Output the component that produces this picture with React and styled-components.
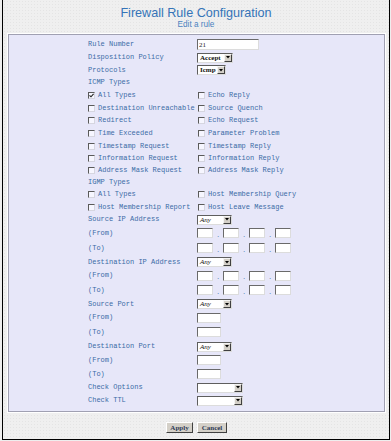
import React from 'react';
import styled, { createGlobalStyle } from 'styled-components';

const GlobalStyle = createGlobalStyle`
  html, body {
    margin: 0;
    padding: 0;
    background: #eeeeee;
  }
`;

const Frame = styled.div`
  box-sizing: border-box;
  margin-left: 2px;
  width: 388px;
  height: 440px;
  border: 1px solid #000;
  border-top: none;
  background-color: #efefef;
  background-image: radial-gradient(#e4e4e4 0.6px, transparent 0.8px);
  background-size: 3px 3px;
  display: flex;
  flex-direction: column;
  padding-top: 6px;
`;

const Title = styled.h1`
  margin: 0;
  text-align: center;
  font-family: "Liberation Sans", Arial, sans-serif;
  font-weight: normal;
  font-size: 12.6px;
  line-height: 14px;
  color: #3574b8;
`;

const SubTitle = styled.div`
  text-align: center;
  font-family: "Liberation Sans", Arial, sans-serif;
  font-size: 8.2px;
  line-height: 10px;
  color: #4a82c0;
`;

const Panel = styled.div`
  margin: 4px 4px 0 5px;
  background: #e7e7f9;
  border: 1px solid #a0a0b2;
  box-shadow: 0 0 0 1px #ffffff;
  padding: 3px 0 4px;
  display: flex;
  justify-content: center;
`;

const Table = styled.div`
  width: 217px;
  display: flex;
  flex-direction: column;
`;

const Row = styled.div`
  display: grid;
  grid-template-columns: 109px 108px;
  align-items: center;
  height: ${p => p.$h || 13}px;
`;

const Label = styled.span`
  font-family: "Liberation Mono", "Courier New", monospace;
  font-size: 7px;
  line-height: 9px;
  color: #3b6ca6;
  white-space: nowrap;
  padding-left: ${p => p.$indent || 0}px;
`;

const CheckCell = styled.label`
  display: flex;
  align-items: center;
  gap: 3px;
  padding-left: ${p => p.$indent || 0}px;
`;

const Box = styled.span`
  box-sizing: border-box;
  width: 7px;
  height: 7px;
  flex: none;
  border: 1px solid;
  border-color: #5a5a5a #d6d6e0 #d6d6e0 #5a5a5a;
  background: #f6f6ff;
  display: flex;
  align-items: center;
  justify-content: center;
`;

function Check({ checked, children, indent }) {
  return (
    <CheckCell $indent={indent}>
      <Box>
        {checked && (
          <svg width="5" height="5" viewBox="0 0 5 5">
            <path d="M0.5 2.3 L2 3.8 L4.6 0.8" stroke="#222" strokeWidth="1.1" fill="none" />
          </svg>
        )}
      </Box>
      <Label>{children}</Label>
    </CheckCell>
  );
}

const TextBox = styled.input`
  box-sizing: border-box;
  width: ${p => p.$w}px;
  height: ${p => p.$hgt || 10}px;
  margin: 0;
  padding: 0 1px;
  border: 1px solid;
  border-color: #6a6a6a #dcdcdc #dcdcdc #6a6a6a;
  background: #ffffff;
  font-family: "Liberation Serif", "Times New Roman", serif;
  font-size: 7px;
  color: #222;
  outline: none;
`;

const IpGroup = styled.div`
  display: flex;
  align-items: center;
`;

const Dot = styled.span`
  width: 10px;
  text-align: center;
  font-family: "Liberation Sans", Arial, sans-serif;
  font-size: 8px;
  line-height: 8px;
  padding-top: 3px;
  color: #3b6ca6;
`;

const SelectBox = styled.div`
  box-sizing: border-box;
  width: ${p => p.$w}px;
  height: 10px;
  border: 1px solid;
  border-color: #5e5e5e #dcdcdc #dcdcdc #5e5e5e;
  background: #ffffff;
  display: flex;
  align-items: stretch;
`;

const SelectValue = styled.span`
  flex: 1;
  padding-left: 2px;
  font-family: "Liberation Serif", "Times New Roman", serif;
  font-size: 7px;
  line-height: 8px;
  font-weight: ${p => (p.$italic ? 'normal' : 'bold')};
  font-style: ${p => (p.$italic ? 'italic' : 'normal')};
  color: #111;
  overflow: hidden;
  white-space: nowrap;
`;

const SelectArrow = styled.span`
  box-sizing: border-box;
  width: 8px;
  background: #d4d0c8;
  border: 1px solid;
  border-color: #f4f4f4 #404040 #404040 #f4f4f4;
  display: flex;
  align-items: center;
  justify-content: center;
`;

function Select({ width, value, italic }) {
  return (
    <SelectBox $w={width}>
      <SelectValue $italic={italic}>{value}</SelectValue>
      <SelectArrow>
        <svg width="4" height="3" viewBox="0 0 4 3">
          <path d="M0 0 H4 L2 2.5 Z" fill="#000" />
        </svg>
      </SelectArrow>
    </SelectBox>
  );
}

function IpAddress() {
  return (
    <IpGroup>
      <TextBox $w={16} />
      <Dot>.</Dot>
      <TextBox $w={16} />
      <Dot>.</Dot>
      <TextBox $w={16} />
      <Dot>.</Dot>
      <TextBox $w={16} />
    </IpGroup>
  );
}

const ButtonBar = styled.div`
  display: flex;
  justify-content: center;
  gap: 4px;
  margin-top: 10px;
  padding-left: 1px;
`;

const Button = styled.button`
  box-sizing: border-box;
  height: 11px;
  width: ${p => p.$w}px;
  padding: 0;
  margin: 0;
  background: #d4d0c8;
  border: 1px solid;
  border-color: #ffffff #404040 #404040 #ffffff;
  font-family: "Liberation Serif", "Times New Roman", serif;
  font-size: 7px;
  font-weight: bold;
  line-height: 8px;
  color: #2e3a55;
  cursor: pointer;
`;

export default function App() {
  return (
    <>
      <GlobalStyle />
      <Frame>
        <Title>Firewall Rule Configuration</Title>
        <SubTitle>Edit a rule</SubTitle>
        <Panel>
          <Table>
            <Row $h={13}>
              <Label>Rule Number</Label>
              <TextBox $w={62} $hgt={11} defaultValue="21" />
            </Row>
            <Row $h={13}>
              <Label>Disposition Policy</Label>
              <Select width={36} value="Accept" />
            </Row>
            <Row $h={12}>
              <Label>Protocols</Label>
              <Select width={29} value="Icmp" />
            </Row>
            <Row $h={13}>
              <Label>ICMP Types</Label>
            </Row>
            <Row $h={13}>
              <Check checked>All Types</Check>
              <Check indent={1}>Echo Reply</Check>
            </Row>
            <Row $h={12}>
              <Check>Destination Unreachable</Check>
              <Check indent={1}>Source Quench</Check>
            </Row>
            <Row $h={13}>
              <Check>Redirect</Check>
              <Check indent={1}>Echo Request</Check>
            </Row>
            <Row $h={13}>
              <Check>Time Exceeded</Check>
              <Check indent={1}>Parameter Problem</Check>
            </Row>
            <Row $h={12}>
              <Check>Timestamp Request</Check>
              <Check indent={1}>Timestamp Reply</Check>
            </Row>
            <Row $h={12}>
              <Check>Information Request</Check>
              <Check indent={1}>Information Reply</Check>
            </Row>
            <Row $h={12}>
              <Check>Address Mask Request</Check>
              <Check indent={1}>Address Mask Reply</Check>
            </Row>
            <Row $h={12}>
              <Label>IGMP Types</Label>
            </Row>
            <Row $h={13}>
              <Check>All Types</Check>
              <Check indent={1}>Host Membership Query</Check>
            </Row>
            <Row $h={12}>
              <Check>Host Membership Report</Check>
              <Check indent={1}>Host Leave Message</Check>
            </Row>
            <Row $h={13}>
              <Label>Source IP Address</Label>
              <Select width={35} value="Any" italic />
            </Row>
            <Row $h={14}>
              <Label>(From)</Label>
              <IpAddress />
            </Row>
            <Row $h={16}>
              <Label>(To)</Label>
              <IpAddress />
            </Row>
            <Row $h={12}>
              <Label>Destination IP Address</Label>
              <Select width={35} value="Any" italic />
            </Row>
            <Row $h={15}>
              <Label>(From)</Label>
              <IpAddress />
            </Row>
            <Row $h={14}>
              <Label>(To)</Label>
              <IpAddress />
            </Row>
            <Row $h={14}>
              <Label>Source Port</Label>
              <Select width={35} value="Any" italic />
            </Row>
            <Row $h={13}>
              <Label>(From)</Label>
              <TextBox $w={24} />
            </Row>
            <Row $h={16}>
              <Label>(To)</Label>
              <TextBox $w={24} />
            </Row>
            <Row $h={13}>
              <Label>Destination Port</Label>
              <Select width={35} value="Any" italic />
            </Row>
            <Row $h={14}>
              <Label>(From)</Label>
              <TextBox $w={24} />
            </Row>
            <Row $h={14}>
              <Label>(To)</Label>
              <TextBox $w={24} />
            </Row>
            <Row $h={13}>
              <Label>Check Options</Label>
              <Select width={46} value="" />
            </Row>
            <Row $h={13}>
              <Label>Check TTL</Label>
              <Select width={46} value="" />
            </Row>
          </Table>
        </Panel>
        <ButtonBar>
          <Button $w={27}>Apply</Button>
          <Button $w={30}>Cancel</Button>
        </ButtonBar>
      </Frame>
    </>
  );
}
